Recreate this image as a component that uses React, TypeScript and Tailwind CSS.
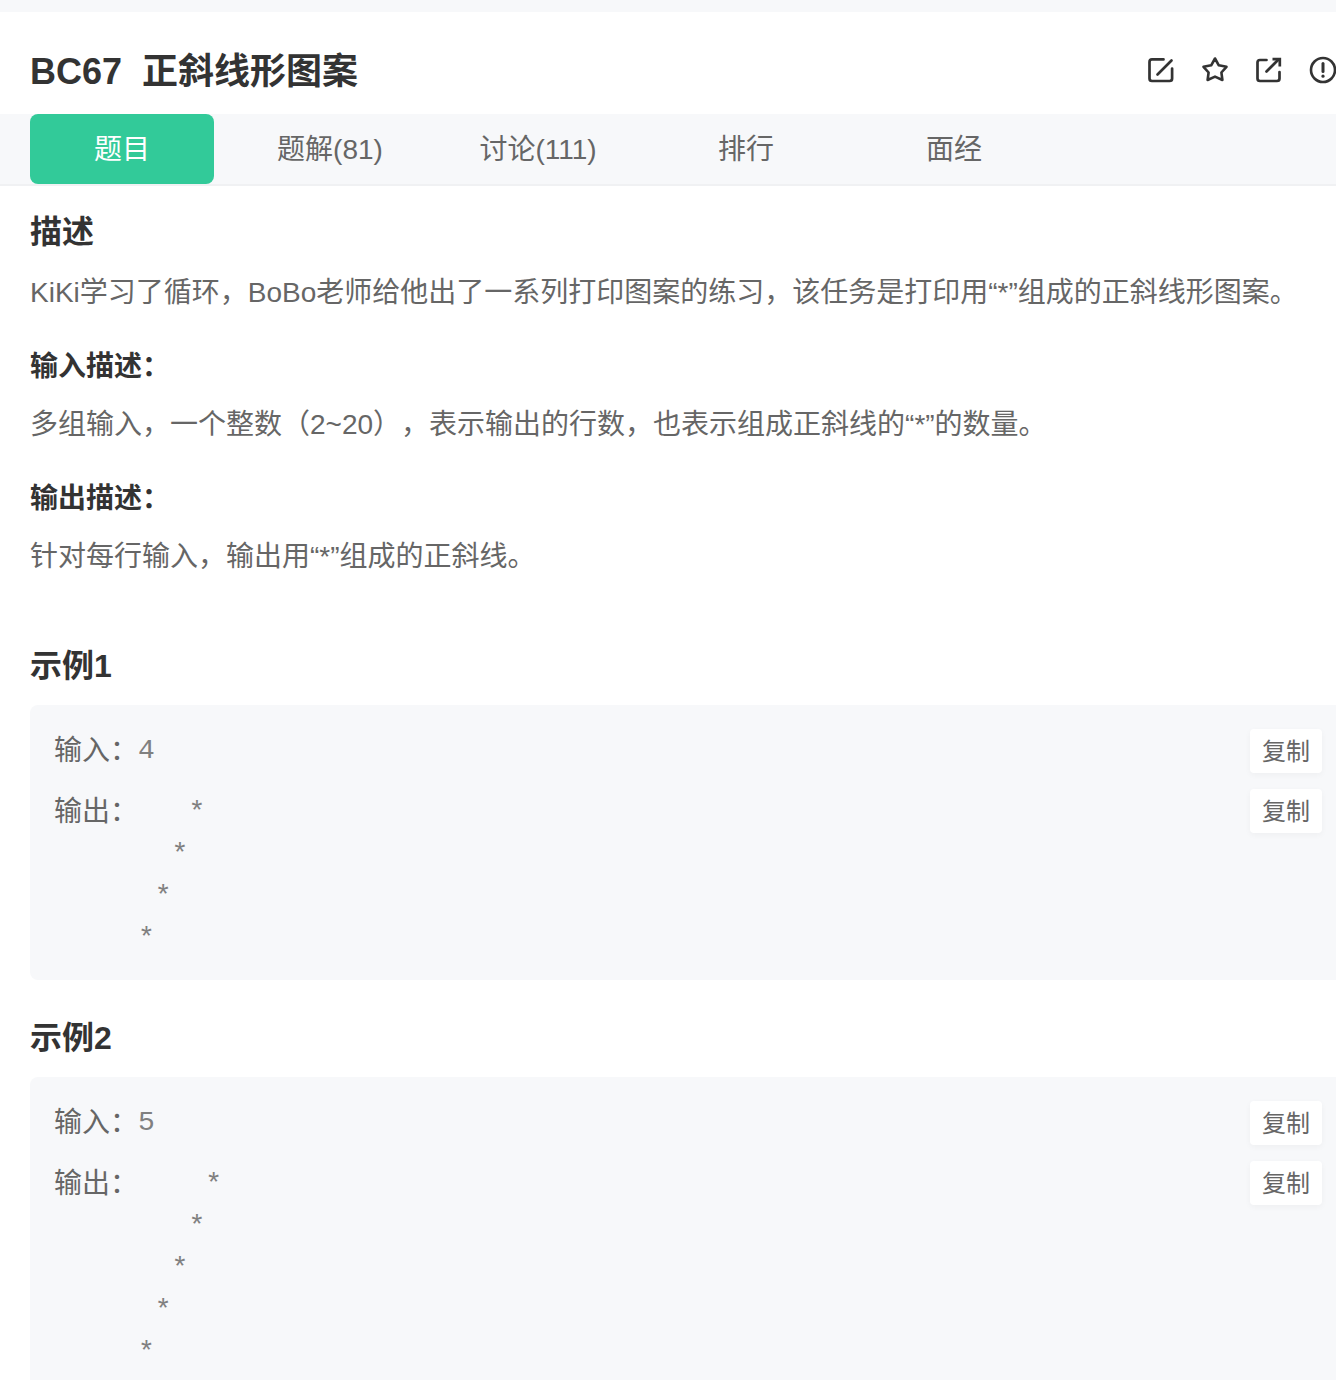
const sans = { fontFamily: '"Liberation Sans", "Noto Sans CJK SC", sans-serif' }

function EditIcon() {
  return (
    <svg width="28" height="28" viewBox="0 0 28 28" fill="none" stroke="#333" strokeWidth="2.7" strokeLinecap="round" strokeLinejoin="round">
      <path d="M16.5 3.4H5a2.5 2.5 0 0 0-2.5 2.5v16.6a2.5 2.5 0 0 0 2.5 2.5h17.6a2.5 2.5 0 0 0 2.5-2.5V12.5" />
      <path d="M10.5 18.5 24.5 4.5" />
    </svg>
  )
}

function StarIcon() {
  return (
    <svg width="28" height="28" viewBox="0 0 28 28" fill="none" stroke="#333" strokeWidth="2.6" strokeLinejoin="round">
      <path d="M14 2.5 17.8 9.3 25.5 10.8 20.4 16.5 21.4 24 14 20.6 6.6 24 7.6 16.5 2.5 10.8 10.2 9.3Z" />
    </svg>
  )
}

function ShareIcon() {
  return (
    <svg width="28" height="28" viewBox="0 0 28 28" fill="none" stroke="#333" strokeWidth="2.7" strokeLinecap="round" strokeLinejoin="round">
      <path d="M11.5 4H5a2.5 2.5 0 0 0-2.5 2.5v16a2.5 2.5 0 0 0 2.5 2.5h17a2.5 2.5 0 0 0 2.5-2.5V16" />
      <path d="M11.5 15.5 23 4" />
      <path d="M17.5 3.2H24.8V10.5" strokeLinecap="butt" strokeLinejoin="miter" />
    </svg>
  )
}

function AlertIcon() {
  return (
    <svg width="28" height="28" viewBox="0 0 28 28" fill="none" stroke="#333" strokeWidth="2.6" strokeLinecap="round">
      <circle cx="14" cy="14" r="12" />
      <path d="M14 7.5V15.5" strokeWidth="3" />
      <path d="M14 20v.2" strokeWidth="3.2" />
    </svg>
  )
}

function Tabs() {
  const tabs = ['题解(81)', '讨论(111)', '排行', '面经']
  return (
    <div className="flex h-[72px] gap-6 border-b-2 border-[#f0f1f3] bg-[#f7f8fa] pl-[30px]">
      <div className="flex h-[70px] w-[184px] items-center justify-center rounded-lg bg-[#32ca99] pt-px text-[28px] text-white">题目</div>
      {tabs.map((t) => (
        <div key={t} className="flex h-[70px] w-[184px] items-center justify-center pt-px text-[28px] text-[#666]">{t}</div>
      ))}
    </div>
  )
}

function CopyBtn() {
  return (
    <div className="flex h-11 w-[72px] items-center justify-center rounded bg-white pt-px text-2xl text-[#666] shadow-[0_2px_6px_rgba(0,0,0,0.04)]">复制</div>
  )
}

function Example({ title, input, output, height }: { title: string; input: string; output: string; height: string }) {
  return (
    <div>
      <h2 className="text-[32px] leading-[48px] font-bold text-[#333]">{title}</h2>
      <div className={`mt-[15px] w-[1316px] rounded-lg bg-[#f7f8fa] px-6 pt-6 ${height}`}>
        <div className="flex h-[60px] justify-between">
          <div className="flex pt-px">
            <span className="text-[28px] leading-[42px] text-[#666]">输入：</span>
            <pre className="font-['Liberation_Mono',monospace] text-[28px] leading-[42px] text-[#808080]">{input}</pre>
          </div>
          <CopyBtn />
        </div>
        <div className="flex justify-between">
          <div className="flex pt-[2px]">
            <span className="text-[28px] leading-[42px] text-[#666]">输出：</span>
            <pre className="pt-px font-['Liberation_Mono',monospace] text-[28px] leading-[42px] text-[#808080]">{output}</pre>
          </div>
          <CopyBtn />
        </div>
      </div>
    </div>
  )
}

export default function App() {
  return (
    <div style={sans} className="h-[1380px] w-[1336px] overflow-hidden bg-white">
      <div className="h-3 bg-[#f7f8fa]" />
      <header className="flex h-[102px] items-center justify-between pt-[14px] pl-[30px]">
        <h1 className="pt-1 text-[36px] font-bold text-[#333]">
          BC67<span className="ml-5">正斜线形图案</span>
        </h1>
        <div className="-mr-px flex gap-[26px]">
          <EditIcon />
          <StarIcon />
          <ShareIcon />
          <AlertIcon />
        </div>
      </header>
      <Tabs />
      <main className="pl-[30px]">
        <h2 className="mt-[22px] text-[32px] leading-[48px] font-bold text-[#333]">描述</h2>
        <p className="mt-[12px] pt-px text-[28px] leading-[48px] whitespace-nowrap text-[#666]">KiKi学习了循环，BoBo老师给他出了一系列打印图案的练习，该任务是打印用“*”组成的正斜线形图案。</p>
        <h3 className="mt-[26px] text-[28px] leading-[48px] font-bold text-[#333]">输入描述：</h3>
        <p className="mt-[10px] text-[28px] leading-[48px] [text-spacing-trim:space-all] text-[#666]">多组输入，一个整数（2~20），表示输出的行数，也表示组成正斜线的“*”的数量。</p>
        <h3 className="mt-[26px] text-[28px] leading-[48px] font-bold text-[#333]">输出描述：</h3>
        <p className="mt-[10px] text-[28px] leading-[48px] text-[#666]">针对每行输入，输出用“*”组成的正斜线。</p>
        <div className="mt-[61px]">
          <Example title="示例1" input="4" output={'   *\n  *\n *\n*'} height="h-[275px]" />
        </div>
        <div className="mt-[34px]">
          <Example title="示例2" input="5" output={'    *\n   *\n  *\n *\n*'} height="h-[340px]" />
        </div>
      </main>
    </div>
  )
}
